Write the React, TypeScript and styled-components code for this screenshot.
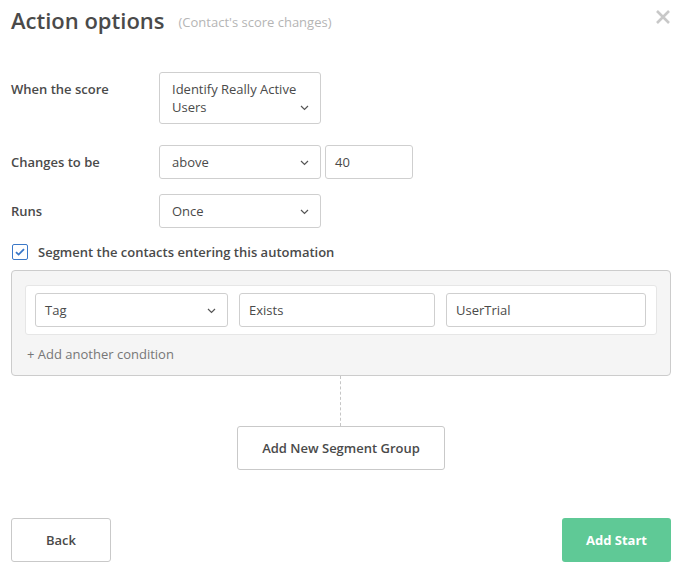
import React from 'react';
import styled, { createGlobalStyle } from 'styled-components';

const GlobalStyle = createGlobalStyle`
  * { box-sizing: border-box; }
  body {
    margin: 0;
    background: #ffffff;
    font-family: 'Open Sans', 'Liberation Sans', sans-serif;
    color: #4a4a4a;
  }
`;

const Modal = styled.div`
  width: 684px;
  height: 570px;
  padding: 0 13px 8px 11px;
  display: flex;
  flex-direction: column;
`;

const Header = styled.div`
  height: 40px;
  display: flex;
  align-items: center;
`;

const Title = styled.h1`
  margin: 0;
  font-size: 22px;
  font-weight: 600;
  color: #4a4a4a;
`;

const Subtitle = styled.span`
  margin-left: 14px;
  margin-top: 4px;
  font-size: 13px;
  color: #b5b5b5;
`;

const CloseButton = styled.button`
  margin-left: auto;
  margin-right: -1px;
  margin-top: -6px;
  border: none;
  background: none;
  padding: 0;
  width: 18px;
  height: 18px;
  display: flex;
  align-items: center;
  justify-content: center;
  cursor: pointer;
`;

const Form = styled.div`
  margin-top: 32px;
  display: flex;
  flex-direction: column;
  gap: 15px;
`;

const Row = styled.div<{ $spaced?: boolean }>`
  display: flex;
  align-items: flex-start;
  margin-bottom: ${({ $spaced }) => ($spaced ? '6px' : '0')};
`;

const Label = styled.div<{ $height: number }>`
  width: 148px;
  height: ${({ $height }) => $height}px;
  display: flex;
  align-items: center;
  font-size: 13px;
  font-weight: 600;
  color: #4a4a4a;
`;

const TopLabel = styled(Label)`
  align-items: flex-start;
  padding-top: 8px;
`;

const Controls = styled.div`
  display: flex;
  gap: 4px;
`;

const Select = styled.div<{ $width: number; $tall?: boolean; $inset?: number }>`
  position: relative;
  width: ${({ $width }) => $width}px;
  height: ${({ $tall }) => ($tall ? 52 : 34)}px;
  border: 1px solid #cfcfcf;
  border-radius: 3px;
  background: #fff;
  padding: ${({ $tall, $inset = 12 }) => ($tall ? `7px 14px 0 ${$inset}px` : `0 36px 0 ${$inset}px`)};
  display: flex;
  align-items: ${({ $tall }) => ($tall ? 'flex-start' : 'center')};
  font-size: 13px;
  line-height: 18px;
  color: #4a4a4a;
`;

const Chevron = styled.span<{ $tall?: boolean }>`
  position: absolute;
  right: 11px;
  top: ${({ $tall }) => ($tall ? '32px' : '14px')};
  display: flex;
`;

const TextInput = styled.div<{ $width: number | string }>`
  width: ${({ $width }) => (typeof $width === 'number' ? `${$width}px` : $width)};
  flex: ${({ $width }) => (typeof $width === 'number' ? 'none' : '1')};
  height: 34px;
  border: 1px solid #cfcfcf;
  border-radius: 3px;
  background: #fff;
  padding: 0 9px;
  display: flex;
  align-items: center;
  font-size: 13px;
  color: #4a4a4a;
`;

const CheckRow = styled.label`
  display: flex;
  align-items: center;
  gap: 10px;
  margin-left: 1px;
  font-size: 13px;
  font-weight: 600;
  color: #4a4a4a;
`;

const CheckBox = styled.span`
  width: 16px;
  height: 16px;
  border: 1px solid #3a78c8;
  border-radius: 2px;
  display: flex;
  align-items: center;
  justify-content: center;
  background: #fff;
`;

const SegmentBox = styled.div`
  margin-top: 9px;
  background: #f5f5f5;
  border: 1px solid #cccccc;
  border-radius: 4px;
  padding: 14px 13px 12px 13px;
`;

const ConditionCard = styled.div`
  background: #fff;
  border: 1px solid #e6e6e6;
  border-radius: 3px;
  padding: 7px 10px 7px 9px;
  display: flex;
  gap: 11px;
`;

const AddCondition = styled.div`
  margin-top: 10px;
  margin-left: 2px;
  font-size: 13px;
  color: #777;
`;

const Connector = styled.div`
  width: 0;
  height: 50px;
  margin: 0 auto;
  border-left: 1px dashed #c6c6c6;
  transform: translateX(-1px);
`;

const GroupButtonWrap = styled.div`
  display: flex;
  justify-content: center;
`;

const OutlineButton = styled.button<{ $width: number }>`
  width: ${({ $width }) => $width}px;
  height: 44px;
  border: 1px solid #c9c9c9;
  border-radius: 3px;
  background: #fff;
  font-family: inherit;
  font-size: 13px;
  font-weight: 600;
  color: #4a4a4a;
  cursor: pointer;
`;

const Footer = styled.div`
  margin-top: auto;
  display: flex;
  justify-content: space-between;
`;

const PrimaryButton = styled.button`
  width: 109px;
  height: 44px;
  border: none;
  border-radius: 3px;
  background: #5fc996;
  font-family: inherit;
  font-size: 13px;
  font-weight: 700;
  color: #fff;
  cursor: pointer;
`;

const ChevronIcon = () => (
  <svg width="9" height="6" viewBox="0 0 9 6" fill="none">
    <path d="M1 1l3.5 3.5L8 1" stroke="#555" strokeWidth="1.2" />
  </svg>
);

const CloseIcon = () => (
  <svg width="16" height="16" viewBox="0 0 16 16">
    <path d="M2 2l12 12M14 2L2 14" stroke="#c8c8c8" strokeWidth="2.6" />
  </svg>
);

const CheckIcon = () => (
  <svg width="10" height="8" viewBox="0 0 10 8" fill="none">
    <path d="M1 4.2l2.6 2.4L9 1.2" stroke="#3a78c8" strokeWidth="1.8" />
  </svg>
);

export default function App() {
  return (
    <>
      <GlobalStyle />
      <Modal>
        <Header>
          <Title>Action options</Title>
          <Subtitle>(Contact's score changes)</Subtitle>
          <CloseButton aria-label="Close">
            <CloseIcon />
          </CloseButton>
        </Header>

        <Form>
          <Row $spaced>
            <TopLabel $height={52}>When the score</TopLabel>
            <Select $width={162} $tall>
              Identify Really Active Users
              <Chevron $tall>
                <ChevronIcon />
              </Chevron>
            </Select>
          </Row>

          <Row>
            <Label $height={34}>Changes to be</Label>
            <Controls>
              <Select $width={162}>
                above
                <Chevron>
                  <ChevronIcon />
                </Chevron>
              </Select>
              <TextInput $width={88}>40</TextInput>
            </Controls>
          </Row>

          <Row>
            <Label $height={34}>Runs</Label>
            <Select $width={162}>
              Once
              <Chevron>
                <ChevronIcon />
              </Chevron>
            </Select>
          </Row>

          <CheckRow>
            <CheckBox>
              <CheckIcon />
            </CheckBox>
            Segment the contacts entering this automation
          </CheckRow>
        </Form>

        <SegmentBox>
          <ConditionCard>
            <Select $width={193} $inset={9}>
              Tag
              <Chevron>
                <ChevronIcon />
              </Chevron>
            </Select>
            <TextInput $width={196}>Exists</TextInput>
            <TextInput $width="auto">UserTrial</TextInput>
          </ConditionCard>
          <AddCondition>+ Add another condition</AddCondition>
        </SegmentBox>

        <Connector />
        <GroupButtonWrap>
          <OutlineButton $width={208}>Add New Segment Group</OutlineButton>
        </GroupButtonWrap>

        <Footer>
          <OutlineButton $width={100}>Back</OutlineButton>
          <PrimaryButton>Add Start</PrimaryButton>
        </Footer>
      </Modal>
    </>
  );
}
